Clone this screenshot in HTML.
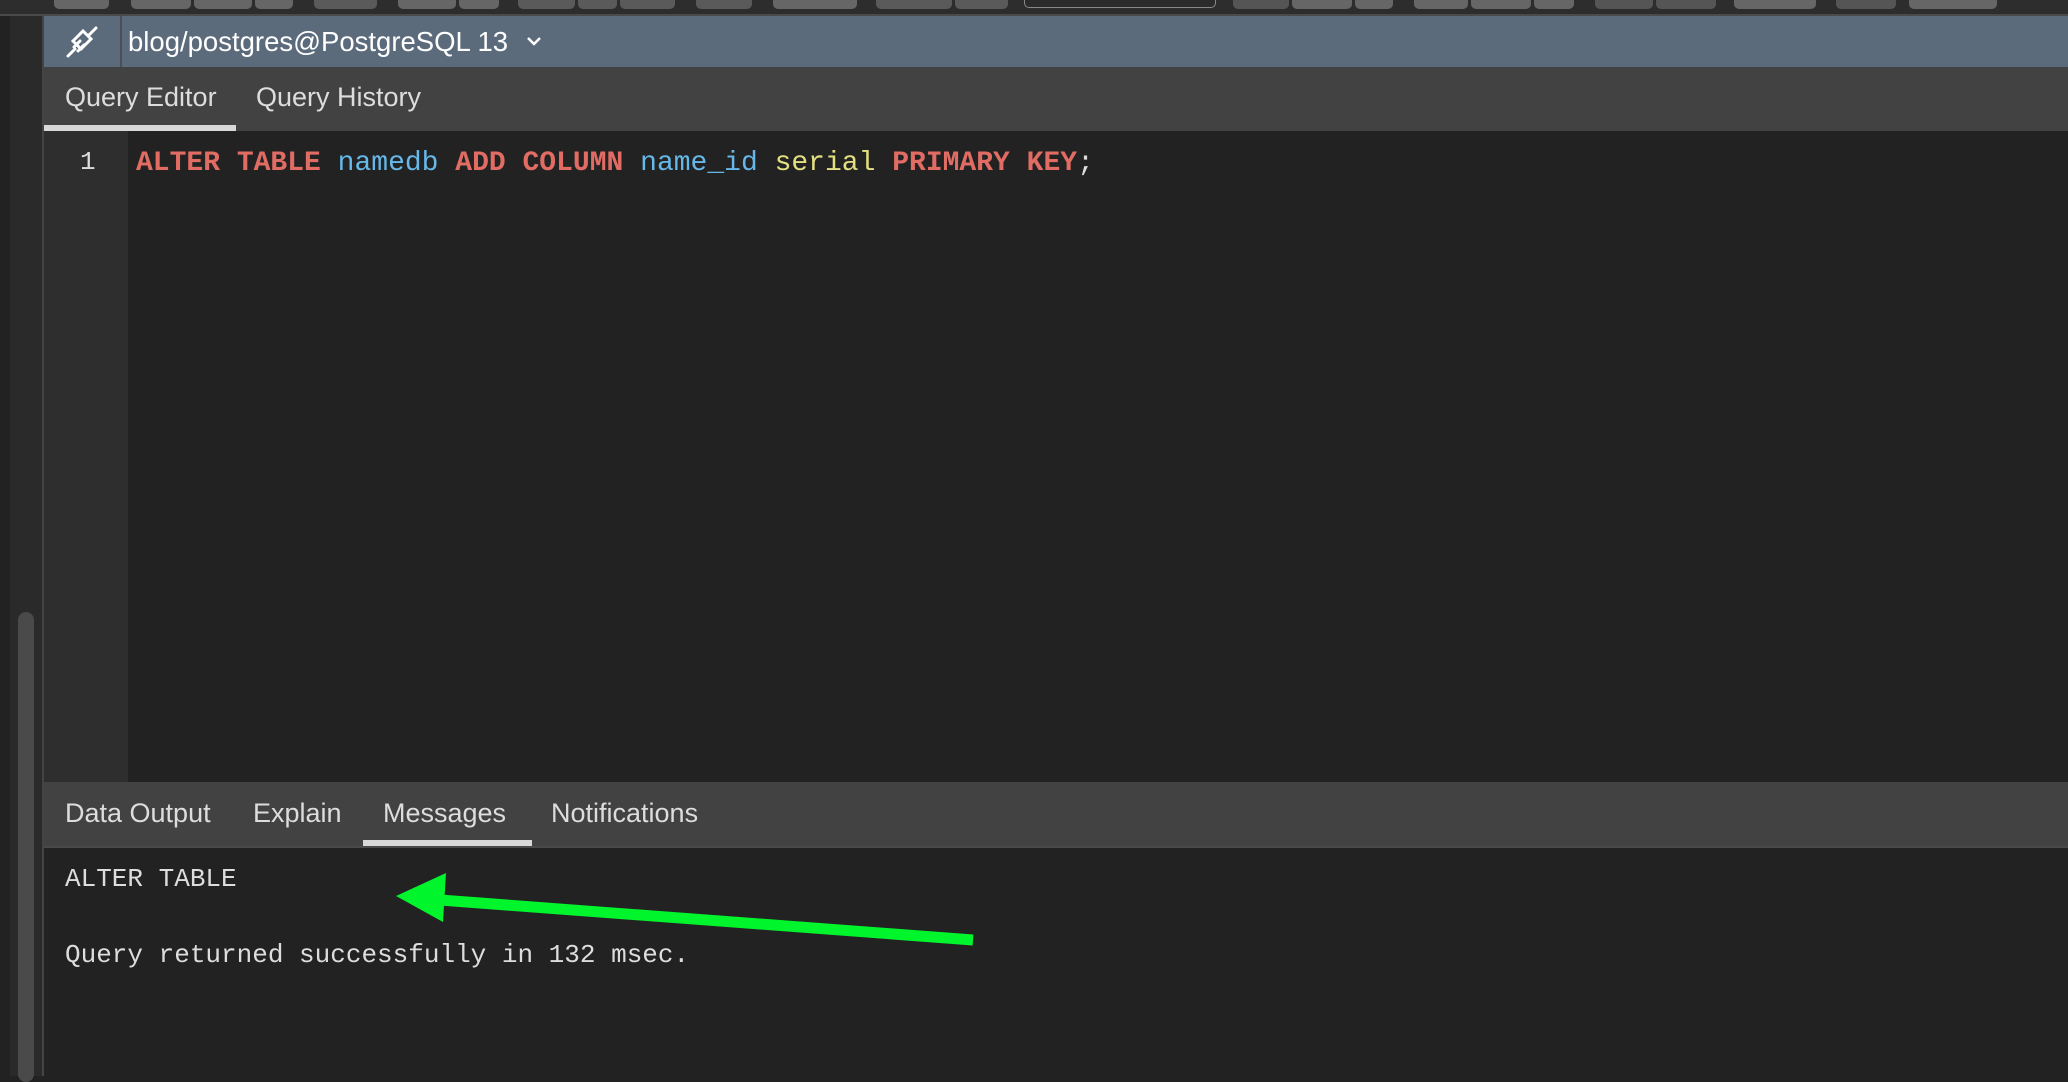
<!DOCTYPE html>
<html><head><meta charset="utf-8"><style>
html,body{margin:0;padding:0;width:2068px;height:1076px;overflow:hidden;background:#222;font-family:"Liberation Sans",sans-serif}
.a{position:absolute}
.btn{position:absolute;top:0;height:9px;background:#666;border-radius:0 0 5px 5px}
.mono{font-family:"Liberation Mono",monospace}
.k{color:#e06c64;font-weight:bold}.i{color:#66b8e8}.y{color:#e4e080}
</style></head><body>
<div class="a" style="left:0;top:0;width:2068px;height:16px;background:#2d2d2d"></div>
<div class="a" style="left:0;top:14px;width:2068px;height:2px;background:#4a4a4a"></div>
<div class="btn" style="left:54px;width:55px"></div>
<div class="btn" style="left:131px;width:60px"></div><div class="btn" style="left:194px;width:58px"></div><div class="btn" style="left:255px;width:38px"></div>
<div class="btn" style="left:314px;width:63px;background:#5a5a5a"></div>
<div class="btn" style="left:398px;width:58px"></div><div class="btn" style="left:459px;width:40px"></div>
<div class="btn" style="left:518px;width:57px;background:#5a5a5a"></div><div class="btn" style="left:578px;width:39px;background:#5a5a5a"></div><div class="btn" style="left:620px;width:55px;background:#5a5a5a"></div>
<div class="btn" style="left:696px;width:56px;background:#5a5a5a"></div>
<div class="btn" style="left:773px;width:84px"></div>
<div class="btn" style="left:876px;width:76px;background:#5a5a5a"></div><div class="btn" style="left:955px;width:53px;background:#5a5a5a"></div>
<div class="btn" style="left:1024px;width:190px;height:7px;background:#2b2b2b;border:1px solid #888;border-top:none"></div>
<div class="btn" style="left:1233px;width:56px;background:#555"></div><div class="btn" style="left:1292px;width:60px"></div><div class="btn" style="left:1355px;width:38px"></div>
<div class="btn" style="left:1414px;width:54px"></div><div class="btn" style="left:1471px;width:60px"></div><div class="btn" style="left:1534px;width:40px"></div>
<div class="btn" style="left:1595px;width:58px;background:#555"></div><div class="btn" style="left:1656px;width:60px;background:#555"></div>
<div class="btn" style="left:1734px;width:82px"></div>
<div class="btn" style="left:1836px;width:60px;background:#555"></div>
<div class="btn" style="left:1909px;width:88px"></div>

<div class="a" style="left:0;top:16px;width:10px;height:1060px;background:#222"></div>
<div class="a" style="left:10px;top:16px;width:32px;height:1060px;background:#2a2a2a"></div>
<div class="a" style="left:18px;top:612px;width:16px;height:470px;background:#4a4a4a;border-radius:8px"></div>
<div class="a" style="left:42px;top:16px;width:2px;height:1060px;background:#444"></div>

<div class="a" style="left:44px;top:16px;width:2024px;height:51px;background:#5b6b7b"></div>
<div class="a" style="left:120px;top:16px;width:2px;height:51px;background:#4a4f55"></div>
<svg class="a" style="left:64px;top:25px" width="36" height="34" viewBox="0 0 36 34"><g fill="none" stroke="#fff" stroke-width="3" stroke-linecap="round"><path d="M4 31 L11 24"/><path d="M25 10 L32 3"/><path d="M12 14 L22 4 L30 12 L20 22 Z" transform="translate(-3,2)"/><path d="M10 22 L16 16"/><path d="M14 26 L20 20"/></g></svg>
<div class="a" style="left:128px;top:25px;font-size:27.5px;color:#fff;line-height:34px">blog/postgres@PostgreSQL 13</div>
<svg class="a" style="left:526px;top:36px" width="16" height="12" viewBox="0 0 16 12"><path d="M2 2 L8 8 L14 2" stroke="#fff" stroke-width="2.5" fill="none"/></svg>

<div class="a" style="left:44px;top:67px;width:2024px;height:64px;background:#424242"></div>
<div class="a" style="left:65px;top:82px;font-size:27px;color:#ddd">Query Editor</div>
<div class="a" style="left:256px;top:82px;font-size:27px;color:#ddd">Query History</div>
<div class="a" style="left:44px;top:125px;width:192px;height:6px;background:#d8d8d8"></div>

<div class="a" style="left:44px;top:131px;width:84px;height:652px;background:#2e2e2e"></div>
<div class="a mono" style="left:80px;top:147px;font-size:26px;color:#ddd">1</div>
<div class="a mono" style="left:136px;top:148px;font-size:28px;color:#ddd;white-space:pre"><span class="k">ALTER TABLE</span> <span class="i">namedb</span> <span class="k">ADD COLUMN</span> <span class="i">name_id</span> <span class="y">serial</span> <span class="k">PRIMARY KEY</span>;</div>

<div class="a" style="left:44px;top:782px;width:2024px;height:64px;background:#424242"></div>
<div class="a" style="left:44px;top:846px;width:2024px;height:2px;background:#4a4a4a"></div>
<div class="a" style="left:65px;top:798px;font-size:27px;color:#ddd">Data Output</div>
<div class="a" style="left:253px;top:798px;font-size:27px;color:#ddd">Explain</div>
<div class="a" style="left:383px;top:798px;font-size:27px;color:#ddd">Messages</div>
<div class="a" style="left:551px;top:798px;font-size:27px;color:#ddd">Notifications</div>
<div class="a" style="left:363px;top:840px;width:169px;height:6px;background:#d8d8d8"></div>

<div class="a mono" style="left:65px;top:864px;font-size:26px;color:#ddd;white-space:pre">ALTER TABLE</div>
<div class="a mono" style="left:65px;top:940px;font-size:26px;color:#ddd;white-space:pre">Query returned successfully in 132 msec.</div>

<svg class="a" style="left:0;top:0" width="2068" height="1076"><line x1="973" y1="940" x2="440" y2="900" stroke="#00f52c" stroke-width="11"/><polygon points="396,896 446,873 443,922" fill="#00f52c"/></svg>
</body></html>
